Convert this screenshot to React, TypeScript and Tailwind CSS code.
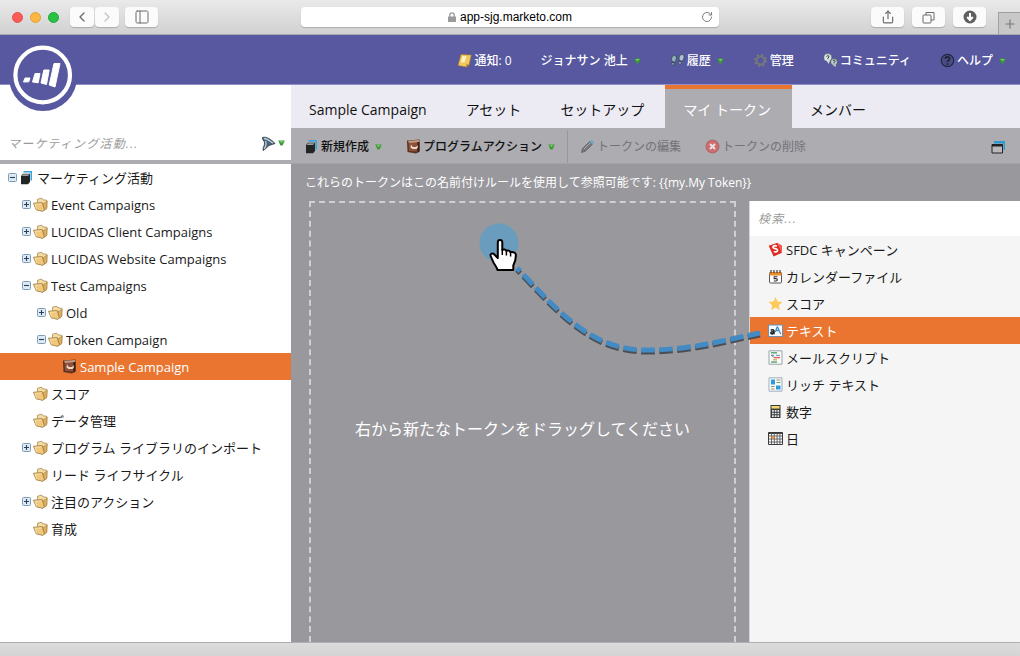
import React, { useState } from 'react';
import { ChevronLeft, ChevronRight, PanelLeft, Plus, RotateCw, Share } from 'lucide-react';

type IconName =
  | 'folder' | 'stack' | 'program' | 'sfdc' | 'calendar' | 'star' | 'text'
  | 'script' | 'rich' | 'number' | 'date' | 'note' | 'steps' | 'gear'
  | 'community' | 'help' | 'pencil' | 'remove';

interface TreeNode {
  label: string;
  depth: number;
  icon: IconName;
  toggle?: 'open' | 'closed';
}

const TREE: TreeNode[] = [
  { label: 'マーケティング活動', depth: 0, icon: 'stack', toggle: 'open' },
  { label: 'Event Campaigns', depth: 1, icon: 'folder', toggle: 'closed' },
  { label: 'LUCIDAS Client Campaigns', depth: 1, icon: 'folder', toggle: 'closed' },
  { label: 'LUCIDAS Website Campaigns', depth: 1, icon: 'folder', toggle: 'closed' },
  { label: 'Test Campaigns', depth: 1, icon: 'folder', toggle: 'open' },
  { label: 'Old', depth: 2, icon: 'folder', toggle: 'closed' },
  { label: 'Token Campaign', depth: 2, icon: 'folder', toggle: 'open' },
  { label: 'Sample Campaign', depth: 3, icon: 'program' },
  { label: 'スコア', depth: 1, icon: 'folder' },
  { label: 'データ管理', depth: 1, icon: 'folder' },
  { label: 'プログラム ライブラリのインポート', depth: 1, icon: 'folder', toggle: 'closed' },
  { label: 'リード ライフサイクル', depth: 1, icon: 'folder' },
  { label: '注目のアクション', depth: 1, icon: 'folder', toggle: 'closed' },
  { label: '育成', depth: 1, icon: 'folder' },
];

const INDENT = ['pl-2', 'pl-[22px]', 'pl-[37px]', 'pl-[51px]'];

const TABS = ['Sample Campaign', 'アセット', 'セットアップ', 'マイ トークン', 'メンバー'];

const TOKENS: { label: string; icon: IconName }[] = [
  { label: 'SFDC キャンペーン', icon: 'sfdc' },
  { label: 'カレンダーファイル', icon: 'calendar' },
  { label: 'スコア', icon: 'star' },
  { label: 'テキスト', icon: 'text' },
  { label: 'メールスクリプト', icon: 'script' },
  { label: 'リッチ テキスト', icon: 'rich' },
  { label: '数字', icon: 'number' },
  { label: '日', icon: 'date' },
];

const NAV: { label: string; icon?: IconName; menu?: boolean }[] = [
  { label: '通知: 0', icon: 'note' },
  { label: 'ジョナサン 池上', menu: true },
  { label: '履歴', icon: 'steps', menu: true },
  { label: '管理', icon: 'gear' },
  { label: 'コミュニティ', icon: 'community' },
  { label: 'ヘルプ', icon: 'help', menu: true },
];

const SHAPES: Record<IconName, React.ReactNode> = {
  folder: (
    <>
      <path d="M4.5 5.5V2.2L8.8 1.2 9.8 2.8 13.8 3.3V11L9.5 13.5Z" fill="#f4dda4" stroke="#a98a50" strokeWidth=".8" />
      <path d="M14.3 4.2 13.5 12 9 14.3 10 6.8Z" fill="#dcae5e" stroke="#9c7539" strokeWidth=".5" />
      <path d="M.5 6.2 9.2 5.6 11.500 13 9.500 14.3 3.2 12.800Z" fill="#efc87c" stroke="#9c7539" strokeWidth=".8" strokeLinejoin="round" />
      <path d="M3.600 12.300 2 7.400l6.500-.5" fill="none" stroke="#fbe9bd" strokeWidth=".7" />
    </>
  ),
  stack: (
    <>
      <path d="M4.500 1h8.500v9.500h-1.500V2.500H4.500Z" fill="#35a5dd" />
      <path d="M2 6 4 3.800h7v8.200l-2 2.300H2Z" fill="#232426" />
      <path d="M2.500 5.900 4.200 4.200h6.300L9 5.900Z" fill="#9a9ca0" />
    </>
  ),
  program: (
    <>
      <path d="M1 1.500 13.500.5v12L10 14.500 1.500 13Z" fill="#5c3020" />
      <path d="M2.500 3 11 2.500v10L3 12Z" fill="#8d5039" />
      <path d="M2 1.800 13 1v2L3 4Z" fill="#c49a83" />
      <path d="M5 5.500 6.800 8H10L12 6v2.500L10.500 10H6.500L4.500 8.500Z" fill="#efd9cb" />
      <path d="M11.800 3h1.700v9l-1.700 2Z" fill="#3b1c13" />
    </>
  ),
  sfdc: (
    <>
      <path d="M.7 3.800 9.500.8 14 10.800 5.600 14.400Z" fill="#dd2a22" />
      <path d="M9.500 1 14 3.500v7Z" fill="#f2574a" />
      <path d="M8.800 4.200C7 3 4.600 4 5 5.600c.5 1.700 4 .5 4.500 2.300.5 1.600-2 2.700-3.700 1.500" fill="none" stroke="#fff" strokeWidth="1.700" />
    </>
  ),
  calendar: (
    <>
      <rect x="1.500" y="3.500" width="12" height="10.500" rx="1" fill="#fff" stroke="#55565a" />
      <path d="M1.500 3h12v3.500h-12Z" fill="#e88b2d" />
      <path d="M3 1v3M6 1v3M9 1v3M12 1v3" stroke="#333" strokeWidth="1.100" />
      <path d="M9.500 7.800H6.200v1.800h1.800c1.800 0 1.800 2.400 0 2.400H5.800" fill="none" stroke="#333" strokeWidth="1.100" />
    </>
  ),
  star: <path d="m7.500 1 2 4.500 5 .4-3.800 3.300 1.200 4.800-4.400-2.600L3.100 14l1.200-4.800L.5 5.900l5-.4Z" fill="#fdca57" />,
  text: (
    <>
      <path d="M.5 2h14v11.500H.5Z" fill="#f7fbff" stroke="#6d91b5" />
      <path d="M2.800 7.300c1-.9 3.200-.7 3.200.8v3.200M6 8.900c-2-.2-3.300.3-3.100 1.200.2 1.200 2.600 1 3.100-.3" fill="none" stroke="#222" strokeWidth="1.600" />
      <path d="M7.300 9 9.200 4c1.400 0 1.800 5.500 3.800 7M8 7.500h2.800" fill="none" stroke="#438fc5" strokeWidth="1.300" />
    </>
  ),
  script: (
    <>
      <path d="M1 .8h13v13.400H1Z" fill="#fafafa" stroke="#9aa3ab" />
      <path d="M3 2.800h6" stroke="#57a370" strokeWidth="1.400" />
      <path d="M3 5.300h3M8 5.300h4" stroke="#7aa7c4" strokeWidth="1.200" />
      <path d="M6 7.600h6" stroke="#df6259" strokeWidth="1.400" />
      <path d="M5 9.800h4" stroke="#d8a24c" strokeWidth="1.200" />
      <path d="M3 12h6" stroke="#57a370" strokeWidth="1.400" />
      <path d="m3.500 5 2.500 2.600" stroke="#667" />
    </>
  ),
  rich: (
    <>
      <path d="M1 .8h13v13.400H1Z" fill="#fafafa" stroke="#9ab0c2" />
      <path d="M3 2.500h4v5H3ZM8 8.500h4.500v4H8Z" fill="#2b9be0" />
      <path d="M8.500 3h4M3 12h3.500" stroke="#b08b58" strokeWidth="1.200" />
      <path d="M8.500 5.500h4M3 9.500h3.500" stroke="#66a56c" strokeWidth="1.200" />
    </>
  ),
  number: (
    <>
      <path d="M2.500 1h10v13h-10Z" fill="#37383a" />
      <path d="M3.500 2h8v2.600h-8Z" fill="#f6d46d" />
      <path d="M4 6h1.800v1.800H4Zm2.700 0h1.800v1.800H6.700Zm2.700 0h1.800v1.800H9.400ZM4 8.700h1.800v1.600H4Zm2.700 0h1.800v1.600H6.700Zm2.700 0h1.800v1.600H9.400ZM4 11.200h1.800v1.700H4Zm2.700 0h1.800v1.700H6.700Zm2.700 0h1.800v1.700H9.400Z" fill="#e8e8e8" />
    </>
  ),
  date: (
    <>
      <path d="M.5 1.500h14v12H.5Z" fill="#fff" stroke="#3a3b3d" />
      <path d="M.5 2.200h14" stroke="#3a3b3d" strokeWidth="1.600" />
      <path d="M3.500 2v11M6.300 2v11M9.100 2v11M11.900 2v11M1 5h13M1 8h13M1 11h13" stroke="#55565a" strokeWidth=".9" />
      <path d="M3.500 5.200h2.800v2.600H3.500Z" fill="#f08a30" />
    </>
  ),
  note: (
    <>
      <path d="M4 1.500 14.300 2 12 12 9.500 14 1 12.500Z" fill="#f1c95f" stroke="#a5792d" strokeWidth=".6" />
      <path d="M5.500 3 9.500 3.300 7.500 9.500 3.800 9Z" fill="#fdf0c0" />
      <path d="m9 13.500.8-2.300L12 12Z" fill="#9a6a21" />
    </>
  ),
  steps: (
    <>
      <path d="M4.600 2.500c2 0 2 2.500 1.400 4.500L4.800 9.300 2 8.200C.8 5 2.500 2.500 4.600 2.500ZM1.900 9.300l2.500 1c0 2.400-3.400 2.800-2.500-1Z" fill="#8fb3b8" stroke="#27343a" strokeWidth=".6" />
      <path d="M12 1.500c2.500.2 2.300 3 1.500 4.800l-1.500 2-2.700-1.200C8.500 4 10 1.400 12 1.500ZM9 8.300l2.500 1c-.2 2.600-3.600 2.600-2.500-1Z" fill="#a7c6c9" stroke="#27343a" strokeWidth=".6" />
    </>
  ),
  gear: (
    <>
      <circle cx="7.500" cy="7.500" r="4" fill="none" stroke="#77777d" strokeWidth="2" />
      <circle cx="7.500" cy="7.500" r="5.600" fill="none" stroke="#77777d" strokeWidth="2" strokeDasharray="2.200 2.200" />
    </>
  ),
  community: (
    <>
      <circle cx="4.800" cy="4.600" r="4" fill="#d9e5e2" stroke="#46555f" strokeWidth=".6" />
      <path d="m4 8 1.500 3L7 7.500Z" fill="#d9e5e2" />
      <circle cx="11" cy="9" r="3.400" fill="#bccfce" stroke="#36434d" strokeWidth=".6" />
      <path d="m10 12 2.500 2.300.5-3Z" fill="#bccfce" />
      <path d="M3.600 3.600c.4-1.600 2.800-1 2.200.4L4.800 5.400v.8M10 8c.5-1.400 2.600-.8 2 .4l-1 1.200v.8" fill="none" stroke="#26333b" />
    </>
  ),
  help: (
    <>
      <circle cx="7.500" cy="7.500" r="6.200" fill="#4a4c84" stroke="#24253f" strokeWidth="1.200" />
      <path d="M5.300 5.800c.2-2.600 4.400-2.400 4.300 0 0 1.500-2.100 1.600-2.100 3.200M7.500 10.300v1.500" fill="none" stroke="#1d1e30" strokeWidth="1.600" />
    </>
  ),
  pencil: (
    <>
      <path d="m1.500 13.500 1-4 7-6.800 2.800 2.800-7 6.800Z" fill="#77787c" stroke="#58595d" strokeWidth=".7" />
      <path d="m9.500 2.700 1.400-1.400c1-.8 3.600 1.600 2.700 2.700l-1.400 1.500Z" fill="#68a6c4" />
      <path d="m4 10 6-6" stroke="#a9abb0" />
    </>
  ),
  remove: (
    <>
      <circle cx="7.500" cy="7.500" r="6.500" fill="#cc6d6e" stroke="#a75a5d" strokeWidth=".8" />
      <path d="m5 5 5 5M10 5l-5 5" stroke="#ecdfe1" strokeWidth="2" />
    </>
  ),
};

const Icon: React.FC<{ name: IconName }> = ({ name }) => (
  <svg viewBox="0 0 15 15" className="w-[15px] h-[15px] shrink-0" aria-hidden="true">
    {SHAPES[name]}
  </svg>
);

const MenuArrow: React.FC = () => (
  <svg viewBox="0 0 7 6" className="w-[7px] h-[6px] shrink-0" aria-hidden="true">
    <path d="M.3.4h6.400L4.600 5.600H2.400Z" fill="#3c9a36" />
    <path d="M1.500 1h4L3.500 3Z" fill="#7cd069" />
  </svg>
);

const Toggle: React.FC<{ state?: 'open' | 'closed'; label: string }> = ({ state, label }) => {
  if (!state) return <span className="w-[9px] shrink-0" />;
  return (
    <button aria-label={label} aria-expanded={state === 'open'} className="w-[9px] h-[9px] shrink-0">
      <svg viewBox="0 0 9 9" className="w-full h-full">
        <rect x=".5" y=".5" width="8" height="8" rx="1" fill="#dfe9f2" stroke="#7d9cba" />
        <path d={state === 'open' ? 'M2 4.500h5' : 'M2 4.500h5M4.500 2v5'} stroke="#27425f" strokeWidth="1.100" />
      </svg>
    </button>
  );
};

const Logo: React.FC = () => (
  <svg viewBox="0 0 68 68" className="absolute left-[9px] top-2 w-[68px] h-[68px] z-10" role="img" aria-label="Marketo">
    <circle cx="34" cy="34" r="34" fill="#57589f" />
    <circle cx="33.700" cy="32" r="27.300" fill="#57589f" stroke="#fff" strokeWidth="4.200" />
    <g fill="#fff" stroke="#fff" strokeWidth="1" strokeLinejoin="round">
      <path d="M14.500 39 16 35h5l-1.200 3.800Z" />
      <path d="M23.500 39 26 30.500h5l-1.800 9.300Z" />
      <path d="M32 40 34.800 27h5.400l-2.700 14.500Z" />
      <path d="M40.200 42 45 20.500h6L46 44Z" />
    </g>
  </svg>
);

const DragPath: React.FC = () => (
  <svg viewBox="2 2 470 180" className="absolute left-0 top-0 w-[470px] h-[180px] z-10 pointer-events-none" aria-hidden="true">
    <circle cx="190" cy="42" r="19.500" fill="#6a9dbd" />
    <g fill="none" strokeWidth="5" strokeDasharray="13.500 4.500" strokeDashoffset="9">
      <path d="M208 69C248 110 280 151 337 151 382 151 410 142 451 134" stroke="#4b4e54" />
      <path d="M208 67C248 108 280 149 337 149 382 149 410 140 451 132" stroke="#438bc4" />
    </g>
    <path
      d="M188.800 41.500c0-3.200 4.500-3.200 4.500 0v7.500c1.200-1 3.700-.6 4 .9 1.400-.8 3.700-.3 4 1.300 1.500-.8 5.200.3 5.500 2.200.3 4.600-.8 8-2.500 11v4.600h-15.800c-.7-3-2.200-4.300-4-7.500-.9-2-1.800-4-2.800-6.500-.8-2.500 2-3.500 3.700-1.500l3.400 3.500Z"
      fill="#fff"
      stroke="#000"
      strokeWidth="2"
      strokeLinejoin="round"
    />
    <path d="M193.300 48v6M197.400 49.500v5M201.600 51.500v4" stroke="#000" strokeWidth="1.500" />
  </svg>
);

const chromeButton = 'h-5 rounded bg-[#fbfbfb] text-[#6b6b6b] shadow-[0_1px_1px_rgba(0,0,0,0.2)] flex items-center justify-center';

const BrowserBar: React.FC = () => (
  <div className="h-[35px] shrink-0 flex bg-gradient-to-b from-[#ebeaeb] to-[#d2d1d2] border-b border-[#a9a8ae]">
    <div className="w-[301px] flex items-center pl-3">
      <div className="flex gap-[7px]">
        <span className="w-[11px] h-[11px] rounded-full bg-[#fc5b57] border border-[#e2504c]" />
        <span className="w-[11px] h-[11px] rounded-full bg-[#fdb641] border border-[#e0a03a]" />
        <span className="w-[11px] h-[11px] rounded-full bg-[#29c244] border border-[#22a639]" />
      </div>
      <div className="flex gap-px ml-[11px]">
        <button aria-label="Back" className={`${chromeButton} w-6`}><ChevronLeft className="w-4 h-4" /></button>
        <button aria-label="Forward" className={`${chromeButton} w-6`}><ChevronRight className="w-4 h-4 text-[#c4c4c4]" /></button>
      </div>
      <button aria-label="Sidebar" className={`${chromeButton} w-[33px] ml-[6px]`}><PanelLeft className="w-4 h-4" strokeWidth={1.5} /></button>
    </div>
    <div className="flex-1 flex items-center">
      <div className="w-full h-5 rounded bg-white shadow-[0_1px_1px_rgba(0,0,0,0.2)] flex items-center">
        <div className="flex-1 pl-6 flex items-center justify-center gap-1">
          <svg viewBox="0 0 8 10" className="w-2 h-[10px]" aria-hidden="true">
            <rect y="4.500" width="8" height="5.500" rx=".6" fill="#9a9a9a" />
            <path d="M1.800 5V3a2.200 2.200 0 0 1 4.400 0v2" fill="none" stroke="#9a9a9a" strokeWidth="1.300" />
          </svg>
          <input aria-label="Address" defaultValue="app-sjg.marketo.com" className="field-sizing-content font-['Liberation_Sans',sans-serif] text-[12px] leading-4 text-black outline-none" />
        </div>
        <button aria-label="Reload" className="w-6 flex justify-center text-[#808080]"><RotateCw className="w-3 h-3" /></button>
      </div>
    </div>
    <div className="w-[301px] flex items-center justify-end gap-2">
      <button aria-label="Share" className={`${chromeButton} w-[33px]`}><Share className="w-[14px] h-[14px]" strokeWidth={2} /></button>
      <button aria-label="Windows" className={`${chromeButton} w-[33px]`}>
        <svg viewBox="0 0 13 13" className="w-[13px] h-[13px]" fill="none" stroke="#6b6b6b">
          <rect x="1" y="4" width="8" height="8" rx=".8" />
          <path d="M4 4V1.500h8V9H9" />
        </svg>
      </button>
      <button aria-label="Downloads" className={`${chromeButton} w-[33px]`}>
        <svg viewBox="0 0 14 14" className="w-[14px] h-[14px]">
          <circle cx="7" cy="7" r="6.500" fill="#5f5f5f" />
          <path d="M7 3v6M4.200 7 7 10l2.800-3" fill="none" stroke="#fff" strokeWidth="2" />
        </svg>
      </button>
      <button aria-label="New tab" className="self-end ml-1 w-[22px] h-[22px] border-l border-t border-[#a0a0a0] bg-[#c9c8c9] text-[#777] flex items-center justify-center"><Plus className="w-[14px] h-[14px]" strokeWidth={2} /></button>
    </div>
  </div>
);

const Header: React.FC = () => (
  <header className="relative h-[50px] shrink-0 bg-[#57589f] border-b border-[#8f8fc6] flex items-center justify-end pt-[2px] pr-[14px]">
    <Logo />
    <nav className="flex items-center gap-[29px] text-[12px] leading-4 font-medium text-white">
      {NAV.map(item => (
        <a key={item.label} href="#" className="flex items-center gap-[2px] whitespace-nowrap">
          {item.icon && <Icon name={item.icon} />}
          {item.label}
          {item.menu && <span className="pl-1"><MenuArrow /></span>}
        </a>
      ))}
    </nav>
  </header>
);

const Sidebar: React.FC = () => {
  const [selected, setSelected] = useState('Sample Campaign');

  return (
    <aside className="w-[291px] shrink-0 bg-white">
      <div className="h-[79px] flex items-end pl-2 pr-[6px] pb-[5px] border-b-4 border-[#adacb1]">
        <input
          aria-label="マーケティング活動"
          placeholder="マーケティング活動..."
          className="flex-1 min-w-0 h-6 text-[12px] italic tracking-widest outline-none placeholder:text-[#9b9b9b]"
        />
        <button aria-label="Filter" className="h-6 flex items-center gap-[2px]">
          <svg viewBox="0 0 15 15" className="w-[15px] h-[15px]">
            <path d="M1.500 1.500C5 0 11 4 14 7.500 10 9 7 9 5.500 12L2 14.500C1.500 12 4 9 3.500 6.500 3 4.500 1 3.500 1.500 1.500Z" fill="#4a6278" stroke="#26323e" strokeWidth=".8" />
            <path d="M2.800 2.500C6 2.500 9 5 12 7.300M4.500 5c1 2 .5 5-1.300 8" fill="none" stroke="#bfd0dc" strokeWidth="1.300" />
          </svg>
          <MenuArrow />
        </button>
      </div>
      <ul>
        {TREE.map(node => (
          <li
            key={node.label}
            className={`h-[27px] flex items-center gap-[2px] ${INDENT[node.depth]} ${
              node.label === selected ? 'bg-[#e97530] text-white' : 'text-[#1a1a1a]'
            }`}
          >
            <Toggle state={node.toggle} label={`${node.label} 開閉`} />
            <button onClick={() => setSelected(node.label)} className="flex items-center gap-[3px] text-[13px] leading-5 whitespace-nowrap">
              <Icon name={node.icon} />
              {node.label}
            </button>
          </li>
        ))}
      </ul>
    </aside>
  );
};

const Toolbar: React.FC = () => (
  <div className="h-9 shrink-0 bg-[#adacb1] border-b border-[#a3a2a7] flex items-center pt-[2px] text-[12px] leading-4 text-[#111]">
    <div className="self-stretch flex items-center gap-6 pl-[13px] pr-3 border-r border-[#98979c]">
      <button className="flex items-center gap-[2px] font-medium">
        <Icon name="stack" />新規作成<span className="pl-1"><MenuArrow /></span>
      </button>
      <button className="flex items-center gap-[2px] font-medium">
        <Icon name="program" />プログラムアクション<span className="pl-1"><MenuArrow /></span>
      </button>
    </div>
    <div className="flex items-center gap-6 pl-3 text-[#737277]">
      <button disabled className="flex items-center gap-[2px]"><Icon name="pencil" />トークンの編集</button>
      <button disabled className="flex items-center gap-[2px]"><Icon name="remove" />トークンの削除</button>
    </div>
    <button aria-label="Window" className="ml-auto mr-[15px]">
      <svg viewBox="0 0 14 14" className="w-[14px] h-[14px]">
        <path d="M3 1h11v9h-1.500V3.500H3Z" fill="#2b9ad2" />
        <path d="M1 4.500h10.500v8.500H1Z" fill="#b9b8bd" stroke="#222" />
        <path d="M1 5.500h10.500" stroke="#222" strokeWidth="2" />
      </svg>
    </button>
  </div>
);

const TokenPanel: React.FC = () => (
  <aside className="w-[271px] shrink-0 bg-[#f5f5f5] border-l border-[#d5d5d8]">
    <input
      aria-label="検索"
      placeholder="検索..."
      className="block w-full h-[35px] bg-white pl-2 text-[12px] italic tracking-widest outline-none placeholder:text-[#9b9b9b]"
    />
    <ul>
      {TOKENS.map(token => (
        <li key={token.label}>
          <button
            className={`w-full h-[27px] flex items-center gap-[3px] pl-[18px] text-[13px] leading-5 ${
              token.label === 'テキスト' ? 'bg-[#e97530] text-white' : 'text-[#1a1a1a]'
            }`}
          >
            <Icon name={token.icon} />
            {token.label}
          </button>
        </li>
      ))}
    </ul>
  </aside>
);

const App: React.FC = () => {
  const [activeTab, setActiveTab] = useState('マイ トークン');

  return (
    <div className="min-h-screen flex flex-col bg-white font-['Open_Sans','Noto_Sans_CJK_JP',sans-serif]">
      <BrowserBar />
      <Header />
      <div className="flex-1 flex">
        <Sidebar />
        <main className="flex-1 min-w-0 flex flex-col bg-[#99989d]">
          <div className="h-[43px] shrink-0 flex bg-[#ecebf3]">
            {TABS.map(tab => (
              <button
                key={tab}
                onClick={() => setActiveTab(tab)}
                className={`pl-[18px] pr-[21px] pt-[2px] text-[14px] leading-5 whitespace-nowrap border-t-4 ${
                  tab === activeTab ? 'bg-[#adacb1] border-[#e97530] text-white' : 'border-transparent text-[#111]'
                }`}
              >
                {tab}
              </button>
            ))}
          </div>
          <Toolbar />
          <p className="h-[37px] shrink-0 px-[14px] pt-[11px] text-[12px] leading-4 text-white whitespace-nowrap">
            これらのトークンはこの名前付けルールを使用して参照可能です: {'{{my.My Token}}'}
          </p>
          <div className="flex-1 flex gap-[13px] pl-[18px]">
            <div className="relative flex-1 flex items-center justify-center pt-3 border-2 border-b-0 border-dashed border-[#d0cfd3]">
              <p className="text-[16px] leading-6 text-white text-center">右から新たなトークンをドラッグしてください</p>
              <DragPath />
            </div>
            <TokenPanel />
          </div>
        </main>
      </div>
      <footer className="h-[14px] shrink-0 bg-gradient-to-b from-[#dcdcdc] to-[#d4d4d4] border-t border-[#aeaeb0]" />
    </div>
  );
};

export default App;
